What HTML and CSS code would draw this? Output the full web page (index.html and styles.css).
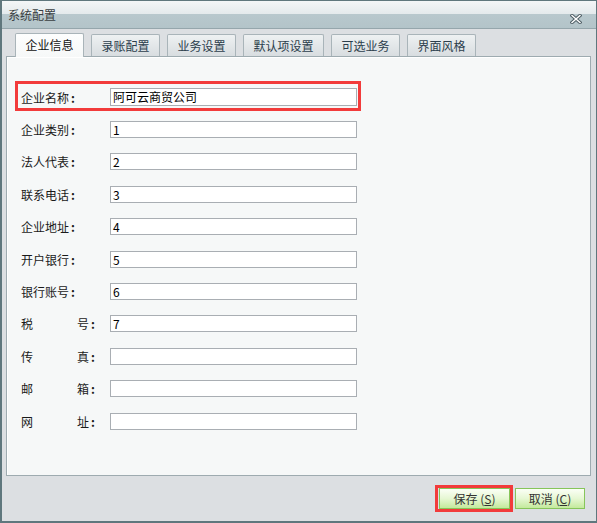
FILE: index.html
```html
<!DOCTYPE html>
<html lang="zh-CN">
<head>
<meta charset="utf-8">
<title>系统配置</title>
<link rel="stylesheet" href="styles.css">
</head>
<body>
<div class="window">
  <div class="titlebar">
    <span class="title">系统配置</span>
    <svg class="close" width="12" height="10" viewBox="0 0 12 10">
      <path d="M2 1.5 L10 8.5 M10 1.5 L2 8.5" stroke="#4f5f66" stroke-width="3.4" stroke-linecap="square" fill="none"/>
      <path d="M2 1.5 L10 8.5 M10 1.5 L2 8.5" stroke="#ffffff" stroke-width="1.4" stroke-linecap="square" fill="none"/>
    </svg>
  </div>
  <div class="tabs">
    <div class="tab active">企业信息</div>
    <div class="tab">录账配置</div>
    <div class="tab">业务设置</div>
    <div class="tab wide">默认项设置</div>
    <div class="tab">可选业务</div>
    <div class="tab">界面风格</div>
  </div>
  <div class="panel">
    <div class="highlight">
      <div class="row first">
        <label class="lbl">企业名称<span class="colon">:</span></label>
        <div class="field">阿可云商贸公司</div>
      </div>
    </div>
    <div class="rows">
      <div class="row"><label class="lbl">企业类别<span class="colon">:</span></label><div class="field">1</div></div>
      <div class="row"><label class="lbl">法人代表<span class="colon">:</span></label><div class="field">2</div></div>
      <div class="row"><label class="lbl">联系电话<span class="colon">:</span></label><div class="field">3</div></div>
      <div class="row"><label class="lbl">企业地址<span class="colon">:</span></label><div class="field">4</div></div>
      <div class="row"><label class="lbl">开户银行<span class="colon">:</span></label><div class="field">5</div></div>
      <div class="row"><label class="lbl">银行账号<span class="colon">:</span></label><div class="field">6</div></div>
      <div class="row"><label class="lbl"><span class="sp">税</span>号<span class="colon">:</span></label><div class="field">7</div></div>
      <div class="row"><label class="lbl"><span class="sp">传</span>真<span class="colon">:</span></label><div class="field"></div></div>
      <div class="row"><label class="lbl"><span class="sp">邮</span>箱<span class="colon">:</span></label><div class="field"></div></div>
      <div class="row"><label class="lbl"><span class="sp">网</span>址<span class="colon">:</span></label><div class="field"></div></div>
    </div>
  </div>
  <div class="footer">
    <div class="btn-mark"><button class="btn">保存 (<u>S</u>)</button></div>
    <button class="btn">取消 (<u>C</u>)</button>
  </div>
</div>
</body>
</html>
```

FILE: styles.css
```css
* { box-sizing: border-box; }
html, body { margin: 0; padding: 0; background: #ffffff; }
body {
  font-family: "Noto Sans CJK SC", "Noto Sans", sans-serif;
  font-size: 12px;
  color: #222;
}
.window {
  width: 597px;
  height: 523px;
  border: 1px solid #5f777d;
  border-left-width: 2px;
  border-bottom-width: 2px;
  background: #dcdfe2;
  display: flex;
  flex-direction: column;
}
.titlebar {
  height: 28px;
  flex: none;
  display: flex;
  align-items: center;
  justify-content: space-between;
  padding: 1px 14px 0 6px;
  background: linear-gradient(to bottom, #f3f6f7 0%, #e4eaec 48%, #b8c8cd 50%, #b3c4c9 100%);
  border-bottom: 1px solid #95a6ac;
}
.title { color: #3a3f42; font-size: 12px; line-height: 14px; }
.close { display: block; margin-top: 7px; }
.tabs {
  display: flex;
  gap: 7px;
  padding-left: 13px;
  margin-top: 5px;
  height: 22px;
  flex: none;
  position: relative;
  z-index: 1;
}
.tab {
  width: 69px;
  height: 22px;
  border: 1px solid #a9b4b9;
  border-bottom: none;
  border-radius: 2px 2px 0 0;
  background: linear-gradient(to bottom, #eef1f2, #d8dde0);
  color: #2c3e4c;
  text-align: center;
  line-height: 21px;
  font-size: 12px;
}
.tab.wide { width: 81px; }
.tab.active {
  height: 24px;
  margin-top: -1px;
  background: linear-gradient(to bottom, #fdfefe, #f6f8f8);
  color: #111;
  line-height: 22px;
}
.panel {
  margin-left: 4px;
  width: 585px;
  height: 420px;
  flex: none;
  background: #f6f8f8;
  border: 1px solid #9eabb0;
  box-shadow: inset 1px 1px 0 #ffffff;
  padding: 24px 0 0 8px;
}
.highlight {
  width: 346px;
  height: 30px;
  border: 3px solid #f23b3b;
  padding: 4px 0 0 3px;
}
.rows {
  display: flex;
  flex-direction: column;
  gap: 15.4px;
  margin-top: 10px;
  padding-left: 6px;
}
.row {
  display: flex;
  align-items: center;
  height: 17px;
}
.row.first { height: 18px; }
.lbl {
  width: 89px;
  flex: none;
  color: #1a1a1a;
  white-space: nowrap;
  line-height: 17px;
}
.sp { display: inline-block; width: 56px; }
.colon { margin-left: 2px; font-weight: bold; }
.field {
  width: 247px;
  height: 17px;
  background: #ffffff;
  border: 1px solid #a9aeb3;
  padding-left: 2px;
  line-height: 15px;
  color: #000;
  font-size: 12px;
}
.row.first .field { height: 18px; line-height: 16px; }
.footer {
  flex: 1;
  display: flex;
  justify-content: flex-end;
  align-items: center;
  gap: 2px;
  padding-right: 11px;
  padding-bottom: 1px;
}
.btn-mark {
  border: 3px solid #f23b3b;
  padding: 0 0 0 1px;
  height: 27px;
}
.btn {
  width: 70px;
  height: 21px;
  padding: 0;
  font-family: "Noto Sans CJK SC", "Noto Sans", sans-serif;
  font-size: 12px;
  color: #333;
  border: 1px solid #86c55a;
  background: linear-gradient(to bottom, #fbfff6 0%, #e6f7d3 50%, #c3ea9c 100%);
  line-height: 19px;
  white-space: nowrap;
}
.btn-mark .btn { width: 71px; }
.btn u { text-decoration: underline; }
```
